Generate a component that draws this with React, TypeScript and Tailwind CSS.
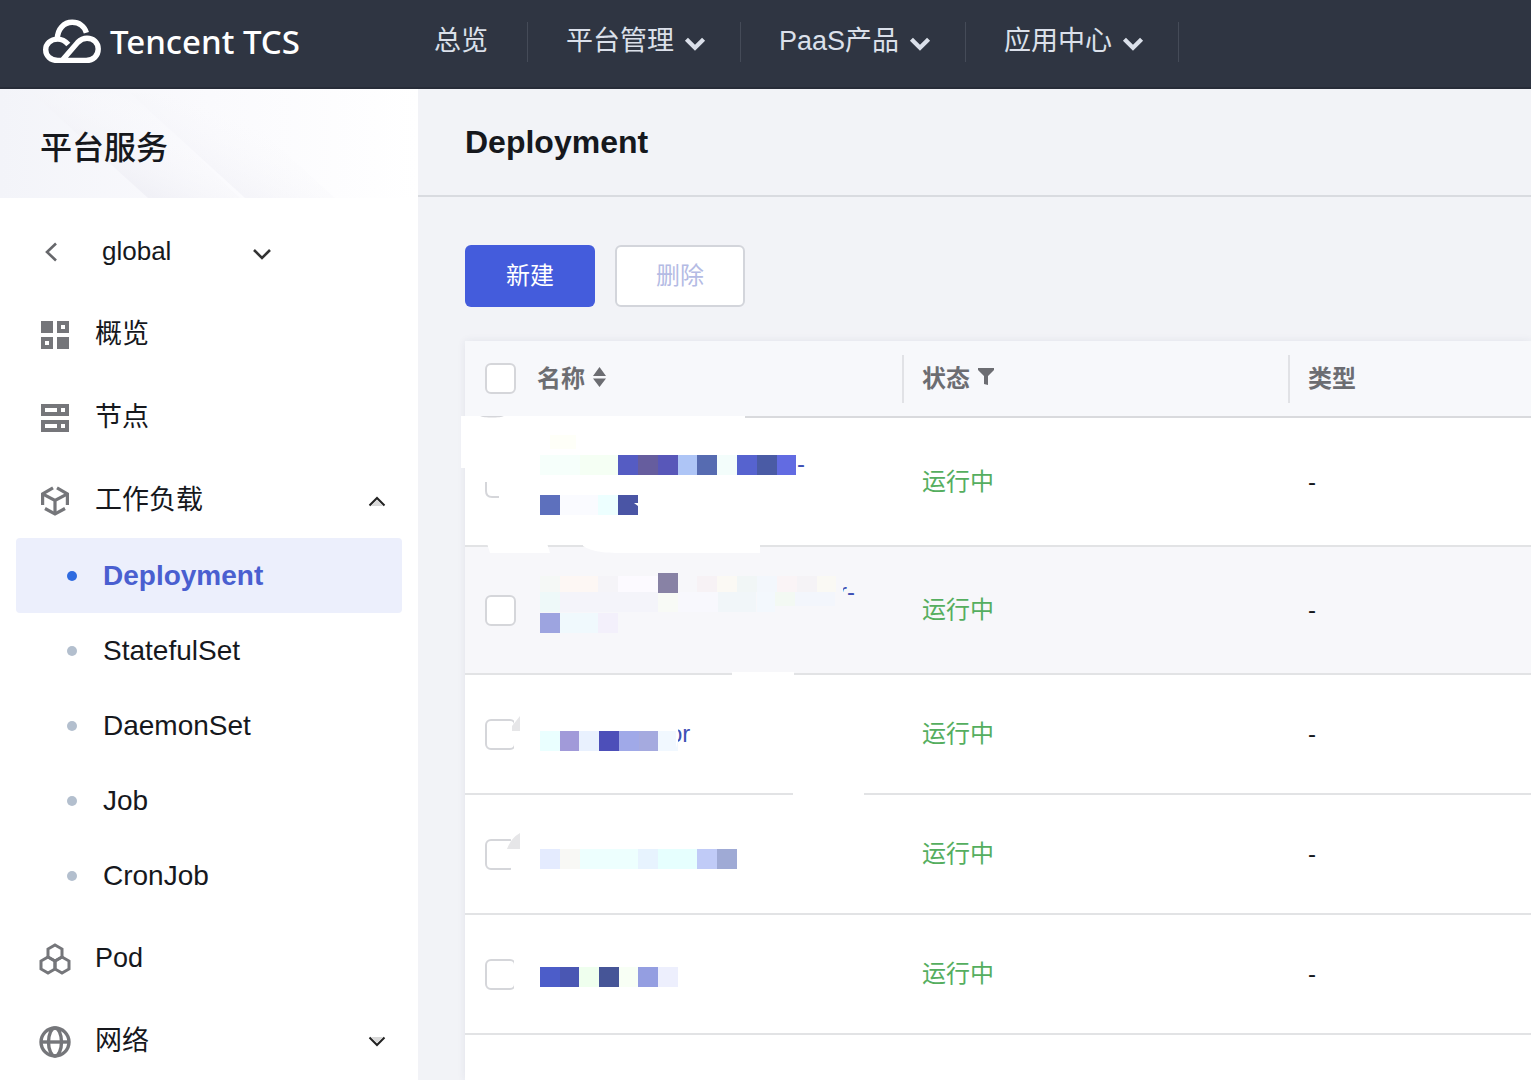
import type { ReactNode } from 'react';

const navItems = [
  { label: '总览', menu: false },
  { label: '平台管理', menu: true },
  { label: 'PaaS产品', menu: true },
  { label: '应用中心', menu: true },
];

const workloads = ['Deployment', 'StatefulSet', 'DaemonSet', 'Job', 'CronJob'];

const rows = [
  { id: 1, height: 'h-[129px]', name: '-', indent: 'pl-[260px]', lines: 2, active: false },
  { id: 2, height: 'h-[128px]', name: 'r-', indent: 'pl-[302px]', lines: 2, active: true },
  { id: 3, height: 'h-[120px]', name: 'or', indent: 'pl-[132px]', lines: 1, active: false },
  { id: 4, height: 'h-[120px]', name: '', indent: '', lines: 1, active: false },
  { id: 5, height: 'h-[120px]', name: '', indent: '', lines: 1, active: false },
];

// masked resource names: x, y, width, height, colour
const blocks: [number, number, number, number, string][] = [
  [540, 455, 40, 20, '#f6fffb'],
  [580, 455, 38, 20, '#f5fff4'],
  [550, 435, 26, 14, '#fefff8'],
  [618, 455, 20, 20, '#555cc3'],
  [638, 455, 20, 20, '#665d9e'],
  [658, 455, 20, 20, '#5857b9'],
  [678, 455, 19, 20, '#aec5f6'],
  [697, 455, 20, 20, '#566bb1'],
  [717, 455, 20, 20, '#f3fdfb'],
  [737, 455, 20, 20, '#5663cf'],
  [757, 455, 20, 20, '#4a5ba5'],
  [777, 455, 19, 20, '#626be2'],
  [540, 495, 20, 20, '#5d70bd'],
  [560, 495, 38, 20, '#fafbff'],
  [598, 495, 20, 20, '#edffff'],
  [618, 495, 20, 20, '#4a55a5'],
  [540, 576, 20, 16, '#f5f8f6'],
  [560, 576, 38, 16, '#fdf7f4'],
  [598, 576, 20, 16, '#f5f4f8'],
  [618, 576, 40, 16, '#fcfaff'],
  [658, 573, 20, 20, '#8882a5'],
  [697, 576, 20, 16, '#f7f2f5'],
  [717, 576, 20, 16, '#fbf9f4'],
  [737, 576, 20, 16, '#f1f6f6'],
  [757, 576, 20, 16, '#f3f7fc'],
  [777, 576, 20, 16, '#faf4f6'],
  [797, 576, 20, 16, '#f5f3f6'],
  [817, 576, 19, 16, '#faf9f4'],
  [540, 592, 20, 20, '#eef9f9'],
  [560, 592, 98, 20, '#f4f4fa'],
  [658, 593, 20, 19, '#f8faf6'],
  [678, 592, 40, 20, '#f8f8fd'],
  [718, 592, 38, 20, '#f1f6f9'],
  [757, 592, 18, 20, '#f3f8fd'],
  [775, 592, 20, 14, '#f3f9f3'],
  [795, 592, 40, 14, '#f3f6fc'],
  [540, 613, 20, 20, '#9da4e0'],
  [560, 613, 38, 20, '#f0f9fd'],
  [598, 613, 20, 20, '#f3f0fb'],
  [540, 731, 20, 20, '#eaffff'],
  [560, 731, 19, 20, '#a19ad9'],
  [579, 731, 20, 20, '#e9f1fe'],
  [599, 731, 20, 20, '#4d4fb9'],
  [619, 731, 20, 20, '#a0a9e8'],
  [639, 731, 19, 20, '#a5aadf'],
  [658, 731, 20, 20, '#f1f8ff'],
  [540, 849, 20, 20, '#e4ebfe'],
  [560, 849, 20, 20, '#f8f8f5'],
  [580, 849, 58, 20, '#edfffe'],
  [638, 849, 20, 20, '#e7f3fe'],
  [658, 849, 39, 20, '#e6fffe'],
  [697, 849, 20, 20, '#c0cbf7'],
  [717, 849, 20, 20, '#9faad5'],
  [540, 967, 20, 20, '#4c5dc9'],
  [560, 967, 19, 20, '#4a57b3'],
  [579, 967, 20, 20, '#efffee'],
  [599, 967, 20, 20, '#465597'],
  [619, 967, 19, 20, '#f8fff5'],
  [638, 967, 20, 20, '#949ee1'],
  [658, 967, 20, 20, '#edeffd'],
];

function Logo() {
  return (
    <svg className="h-[47px] w-[60px] shrink-0" viewBox="42 18 60 47" fill="none" stroke="#fff" strokeWidth="5.4">
      <path d="M57.3 39C57.5 28.8 64 22.3 72.2 22.3c7 0 12.2 4 14.2 10.4" />
      <path d="M68.3 44.5c-3-3.4-6.3-5.4-10.6-5.4-7.2 0-12 4.7-12 10.6 0 6.2 4.8 10.7 12 10.7h28.5c7.2 0 12-4.7 12-11.3 0-6.4-4.8-10.800-11.2-10.800-4.2 0-6.8 1.7-9.4 4.2L62.500 60" />
    </svg>
  );
}

function Chevron({ className, width = 2 }: { className: string; width?: number }) {
  return (
    <svg className={className} viewBox="0 0 20 14" fill="none" stroke="currentColor" strokeWidth={width}>
      <path d="M2 3l8 8 8-8" />
    </svg>
  );
}

function MenuArrow({ open = false }: { open?: boolean }) {
  return (
    <svg className={`h-3 w-[18px] ${open ? '' : 'rotate-180'}`} viewBox="0 0 18 12" fill="none">
      <path d="M3 11L9 5l6 6z" fill="#d9d9d9" />
      <path d="M1.5 10.5L9 3l7.5 7.5" stroke="#222" strokeWidth="2" />
    </svg>
  );
}

function OverviewIcon() {
  return (
    <svg className="size-7" viewBox="0 0 28 28" fill="#75767a" fillRule="evenodd">
      <path d="M0 0h12v12H0zM16 0h12v12H16zM20 4v4h4V4zM0 16h12v12H0zM4 20v4h4v-4zM16 16h12v12H16z" />
    </svg>
  );
}

function NodeIcon() {
  return (
    <svg className="size-7" viewBox="0 0 28 28" fill="#75767a" fillRule="evenodd">
      <path d="M0 0h28v12H0zM4 4v4h12V4zM20 4v4h4V4zM0 16h28v12H0zM4 20v4h12v-4zM20 20v4h4v-4z" />
    </svg>
  );
}

function WorkloadIcon() {
  return (
    <svg className="h-[30px] w-7" viewBox="0 0 28 30" fill="none" stroke="#75767a" strokeWidth="3.2">
      <path d="M12 1.800L1.600 8v11M16 1.800L26.400 8v11" />
      <path d="M2 8.200l12 6.300 12-6.300M14 14v13" />
      <path d="M4 22.500l10 5.500 10-5.500" />
    </svg>
  );
}

function PodIcon() {
  return (
    <svg className="size-8" viewBox="0 0 32 32" fill="none" stroke="#75767a" strokeWidth="3">
      <path d="M16 2l7 4v8l-7 4-7-4V6z" />
      <path d="M9 14l7 4v8l-7 4-7-4v-8z" />
      <path d="M23 14l7 4v8l-7 4-7-4v-8z" />
    </svg>
  );
}

function NetworkIcon() {
  return (
    <svg className="size-8" viewBox="0 0 32 32" fill="none" stroke="#75767a" strokeWidth="3.4">
      <circle cx="16" cy="16" r="14" />
      <ellipse cx="16" cy="16" rx="6.5" ry="14" />
      <path d="M2 16h28" />
    </svg>
  );
}

function SideItem({ icon, label, children }: { icon: ReactNode; label: string; children?: ReactNode }) {
  return (
    <a href="#" className="mt-2 flex h-[75px] items-center pr-8 pl-[39px] text-[27px]">
      <span className="flex w-8 shrink-0 justify-center">{icon}</span>
      <span className="ml-6 flex-1">{label}</span>
      {children}
    </a>
  );
}

function Checkbox({ label }: { label: string }) {
  return (
    <input
      type="checkbox"
      aria-label={label}
      className="ml-5 block size-[31px] appearance-none rounded-md border-2 border-[#d5d6da] bg-white checked:bg-[#445cdc]"
    />
  );
}

function Redaction() {
  return (
    <svg className="pointer-events-none absolute top-0 -left-1 h-[700px] w-[420px]" viewBox="461 341 420 700" aria-hidden="true">
      {/* wiped areas over the borders and checkboxes */}
      <g fill="#fff">
        <path d="M461 416h284v52h-207v47h-70v-47h-7z" />
        <path d="M486 540h60l4 13h-60zM583 540h177v13h-140c-22 0-30-3-37-7z" />
        <path d="M732 672h62v6h-62zM793 790h71v8h-71z" />
        <path d="M514 715h7v40h-7zM511 836h10v38h-10zM514 957h7v38h-7z" />
      </g>
      <path d="M480 416h24c-4 2-20 2-24 0z" fill="#d5d6da" />
      <path d="M486 482v9q0 6 6 6h7" fill="none" stroke="#d5d6da" strokeWidth="2" />
      <path d="M512 731v-5l8-10v15zM507 849q4-11 13-16v16z" fill="#e6e6e8" />
      {blocks.map(([x, y, w, h, fill]) => (
        <rect key={`${x}-${y}`} x={x} y={y} width={w} height={h} fill={fill} />
      ))}
      <path d="M634 503h4v3z" fill="#fff" />
      <path d="M836 578h7v28h-7zM836 592h11v14h-11z" fill="#f7f7fa" />
      <path d="M666 722h10q5 12 0 26h-10z" fill="#fff" />
      <path d="M666 731h10v20h-10z" fill="#f1f8ff" />
    </svg>
  );
}

export default function App() {
  return (
    <div className="flex min-h-screen flex-col overflow-x-hidden bg-[#f2f3f7] font-['Liberation_Sans','Noto_Sans_CJK_SC',sans-serif] text-[#16181d]">
      <header className="flex h-[89px] shrink-0 items-center border-b-2 border-[#272c38] bg-[#2f3542] pb-1">
        <a href="#" className="flex w-[395px] shrink-0 items-center pl-[42px] text-white">
          <Logo />
          <span className="ml-2 font-['Noto_Sans',sans-serif] text-[33px] leading-[44px] font-medium whitespace-nowrap">Tencent TCS</span>
        </a>
        <nav className="flex items-center text-[27px] text-[#dbe0ea]">
          {navItems.map(({ label, menu }) => (
            <a
              key={label}
              href="#"
              className={`flex h-10 items-center gap-[10px] border-r border-[#454b58] whitespace-nowrap ${menu ? 'pr-[34px] pl-[38px]' : 'px-[39px]'}`}
            >
              {label}
              {menu && <Chevron className="mt-1 h-[15px] w-[22px]" width={4} />}
            </a>
          ))}
        </nav>
      </header>

      <div className="flex flex-1">
        <aside className="w-[418px] shrink-0 bg-white">
          <div className="relative flex h-[109px] items-center bg-linear-to-r from-[#f3f4f9] via-[#fafafd] to-white">
            <svg className="absolute inset-0 size-full" viewBox="0 0 418 109" preserveAspectRatio="none" aria-hidden="true">
              <defs>
                <linearGradient id="streak" x1="0" y1="1" x2="1" y2="0">
                  <stop offset="0.3" stopColor="#ececf3" />
                  <stop offset="0.75" stopColor="#fff" stopOpacity="0" />
                </linearGradient>
              </defs>
              <path d="M32 4L148 109h92L130 4z" fill="url(#streak)" opacity="0.6" />
              <path d="M130 4l115 105h90L220 4z" fill="url(#streak)" opacity="0.4" />
            </svg>
            <h2 className="relative pt-2 pl-10 text-[32px] font-medium">平台服务</h2>
          </div>

          <div className="mt-4 flex h-[75px] items-center pl-[41px]">
            <a href="#" aria-label="返回" className="text-[#66676b]">
              <svg className="h-5 w-5" viewBox="0 0 20 20" fill="none" stroke="currentColor" strokeWidth="2.6">
                <path d="M15 1.5L6 10l9 8.5" />
              </svg>
            </a>
            <div className="relative ml-[41px] flex w-[170px] items-center">
              <select aria-label="集群" className="w-full appearance-none bg-transparent text-[26px]">
                <option>global</option>
              </select>
              <Chevron className="pointer-events-none absolute right-0 mt-1 h-[14px] w-5 text-[#333]" width={2.6} />
            </div>
          </div>

          <nav>
            <SideItem icon={<OverviewIcon />} label="概览" />
            <SideItem icon={<NodeIcon />} label="节点" />
            <SideItem icon={<WorkloadIcon />} label="工作负载">
              <MenuArrow open />
            </SideItem>
            <ul className="px-4">
              {workloads.map((name, i) => (
                <li key={name}>
                  <a
                    href="#"
                    className={`flex h-[75px] items-center pl-[51px] text-[28px] ${i === 0 ? 'rounded-sm bg-[#eceffc] font-bold text-[#4a5fd0]' : ''}`}
                  >
                    <span className={`mr-[26px] size-[10px] rounded-full ${i === 0 ? 'bg-[#2f6be0]' : 'bg-[#b3bfce]'}`} />
                    {name}
                  </a>
                </li>
              ))}
            </ul>
            <SideItem icon={<PodIcon />} label="Pod" />
            <SideItem icon={<NetworkIcon />} label="网络">
              <MenuArrow />
            </SideItem>
          </nav>
        </aside>

        <main className="flex min-w-0 flex-1 flex-col">
          <div className="flex h-[108px] items-center border-b-2 border-[#d9dbe0] pl-[47px]">
            <h1 className="text-[32px] font-bold">Deployment</h1>
          </div>

          <div className="flex gap-5 pt-12 pl-[47px] text-2xl">
            <button className="h-[62px] w-[130px] rounded-md bg-[#445cdc] text-white">新建</button>
            <button disabled className="h-[62px] w-[130px] rounded-md border-2 border-[#d3d5db] bg-white text-[#b4bbe4]">
              删除
            </button>
          </div>

          <div className="relative mt-[34px] ml-[47px] flex-1 bg-white shadow-[0_0_8px_rgba(40,50,90,0.08)]">
            <table className="w-full table-fixed border-separate border-spacing-0 text-2xl">
              <colgroup>
                <col className="w-[72px]" />
                <col className="w-[365px]" />
                <col className="w-[386px]" />
                <col />
              </colgroup>
              <thead>
                <tr className="h-[77px] bg-[#f7f8fb] text-left text-[#6c6d72]">
                  <th className="border-b-2 border-[#d9dadd] p-0">
                    <Checkbox label="全选" />
                  </th>
                  <th className="border-b-2 border-[#d9dadd] p-0">
                    <span className="flex items-center gap-2">
                      名称
                      <svg className="mb-1 h-5 w-[13px]" viewBox="0 0 13 20" fill="currentColor">
                        <path d="M6.5 0L13 9H0zM0 11.5h13L6.5 20z" />
                      </svg>
                    </span>
                  </th>
                  <th className="border-b-2 border-[#d9dadd] p-0">
                    <span className="flex h-12 items-center gap-2 border-l-2 border-[#e1e2e6] pl-[18px]">
                      状态
                      <svg className="mb-1 h-[17px] w-4" viewBox="0 0 16 17" fill="currentColor">
                        <path d="M0 0h16v2l-6 6v9l-4-1V8L0 2z" />
                      </svg>
                    </span>
                  </th>
                  <th className="border-b-2 border-[#d9dadd] p-0">
                    <span className="flex h-12 items-center border-l-2 border-[#e1e2e6] pl-[18px]">类型</span>
                  </th>
                </tr>
              </thead>
              <tbody>
                {rows.map((row) => (
                  <tr key={row.id} className={`${row.height} ${row.active ? 'bg-[#f7f7fa]' : 'bg-white'}`}>
                    <td className="border-b-2 border-[#e2e3e5] p-0">
                      <Checkbox label={`选择 ${row.id}`} />
                    </td>
                    <td className="border-b-2 border-[#e2e3e5] p-0">
                      {row.name && (
                        <a href="#" className={`block leading-9 text-[#3f51b5] ${row.indent} ${row.lines === 2 ? 'h-[72px]' : ''}`}>
                          {row.name}
                        </a>
                      )}
                    </td>
                    <td className="border-b-2 border-[#e2e3e5] p-0 pl-5 text-[#55ae5f]">运行中</td>
                    <td className="border-b-2 border-[#e2e3e5] p-0 pl-5">-</td>
                  </tr>
                ))}
              </tbody>
            </table>
            <Redaction />
          </div>
        </main>
      </div>
    </div>
  );
}
